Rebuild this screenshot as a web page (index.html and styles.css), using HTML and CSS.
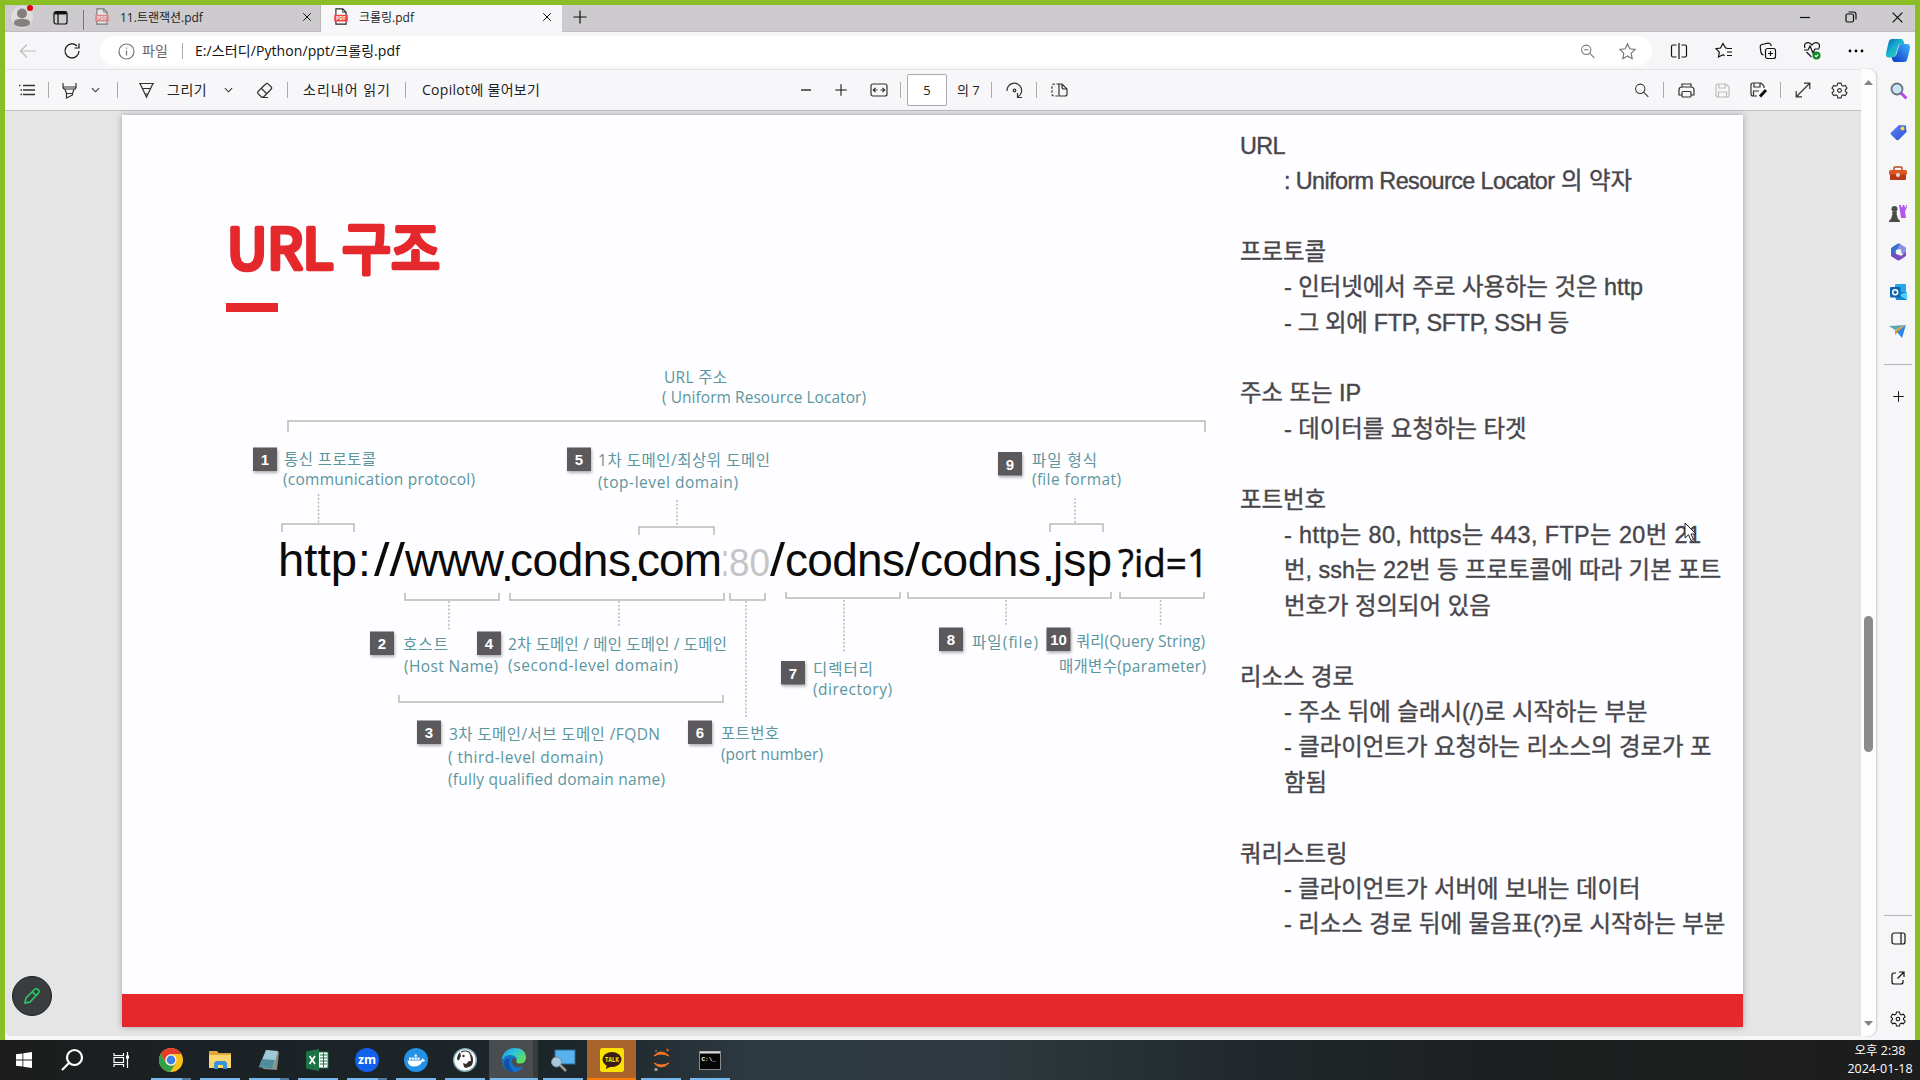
FILE: index.html
```html
<!DOCTYPE html>
<html lang="ko">
<head>
<meta charset="utf-8">
<title>크롤링.pdf</title>
<link rel="stylesheet" href="styles.css">
</head>
<body>
<svg class="defs" aria-hidden="true">
  <defs>
    <symbol id="gear" viewBox="0 0 20 20"><path d="M8.3 2.2h3.4l.6 2.4 1.4.8 2.4-.8 1.8 3-1.8 1.700v1.4l1.800 1.700-1.800 3-2.400-.8-1.400.8-.6 2.400H8.300l-.6-2.400-1.400-.8-2.400.8-1.800-3 1.800-1.700V9.300L2.100 7.600l1.800-3 2.400.8 1.400-.8z"/><circle cx="10" cy="10" r="2"/></symbol>
    <symbol id="pdf" viewBox="0 0 18 20"><path d="M3 1h8l4 4v14H3z" fill="#fff" stroke="#222" stroke-width="1.3"/><path d="M11 1v4h4" fill="none" stroke="#222"/><rect x="1" y="8" width="16" height="8" rx="1" fill="#ee4444"/><text x="9" y="14.200" text-anchor="middle" class="pdf-label">PDF</text></symbol>
    <symbol id="chev" viewBox="0 0 10 6"><path d="M1 1l4 4 4-4"/></symbol>
    <symbol id="plus" viewBox="0 0 16 16"><path d="M8 1.500v13M1.500 8h13"/></symbol>
    <symbol id="close" viewBox="0 0 12 12"><path d="M1.500 1.500l9 9M10.500 1.500l-9 9"/></symbol>
    <symbol id="lens" viewBox="0 0 20 20"><circle cx="8.500" cy="8" r="5.500"/><path d="M12.500 12l5.500 5.500"/></symbol>
    <symbol id="star" viewBox="0 0 20 20"><path d="M10 2l2.400 5.200 5.600.7-4.100 3.900 1 5.700L10 14.700l-4.900 2.800 1-5.700L2 7.900l5.600-.7z"/></symbol>
    <linearGradient id="gCop" x1="0" y1="0" x2="1" y2="1"><stop offset="0" stop-color="#0a63b8"/><stop offset=".45" stop-color="#16b3d0"/><stop offset="1" stop-color="#3be08c"/></linearGradient>
    <linearGradient id="gCop2" x1="0" y1="1" x2="1" y2="0"><stop offset="0" stop-color="#0b38c4"/><stop offset="1" stop-color="#3fb0ff"/></linearGradient>
    <linearGradient id="gEdge" x1="0" y1="0" x2="1" y2=".6"><stop offset="0" stop-color="#1d9ee8"/><stop offset=".5" stop-color="#2fc2d8"/><stop offset="1" stop-color="#5fe05a"/></linearGradient>
    <linearGradient id="gTag" x1="0" y1="0" x2="1" y2="1"><stop offset="0" stop-color="#5a86ff"/><stop offset="1" stop-color="#2e4ed0"/></linearGradient>
  </defs>
</svg>

<div class="browser">
  <header class="tabstrip">
    <span class="cell"><svg width="20" height="24" viewBox="0 0 20 24"><circle cx="10" cy="12" r="11" fill="#dedcdc"/><circle cx="10" cy="8.500" r="5" fill="#85807e"/><path d="M2 18c0-3 2-4 8-4s8 1 8 4c0 5-16 5-16 0z" fill="#85807e"/><circle cx="18" cy="3" r="3" fill="#e3000f"/></svg></span>
    <span class="cell"><svg class="ic dark" width="15" height="15" viewBox="0 0 15 15"><rect x="1" y="1.500" width="13" height="12.500" rx="2"/><path d="M1.500 3.200h12" stroke-width="2.500"/><path d="M5 3v11"/></svg></span>
    <span class="divider"></span>
    <div class="tab faded"><svg class="pdf" width="16" height="17"><use href="#pdf"/></svg><span class="t1">11.트랜잭션.pdf</span><svg class="ic dark x" width="10" height="10"><use href="#close"/></svg></div>
    <div class="tab active"><svg class="pdf" width="16" height="17"><use href="#pdf"/></svg><span class="t2">크롤링.pdf</span><svg class="ic dark x" width="10" height="10"><use href="#close"/></svg></div>
    <span class="cell"><svg class="ic dark" width="16" height="16"><use href="#plus"/></svg></span>
    <span></span>
    <span class="cell"><svg class="ic dark" width="12" height="12" viewBox="0 0 12 12"><path d="M1 6.500h10"/></svg></span>
    <span class="cell"><svg class="ic dark" width="12" height="12" viewBox="0 0 12 12"><rect x="1" y="3" width="7.500" height="8" rx="1.500"/><path d="M3.500 1h5q2.500 0 2.500 2.500v5"/></svg></span>
    <span class="cell"><svg class="ic dark" width="13" height="13"><use href="#close"/></svg></span>
  </header>

  <div class="address">
    <span class="cell"><svg class="ic pale" width="18" height="16" viewBox="0 0 18 16"><path d="M17 8H1.500M8 1.500L1.500 8 8 14.500"/></svg></span>
    <span class="cell"><svg class="ic dark" width="18" height="18" viewBox="0 0 18 18"><path d="M16 9a7 7 0 1 1-2-5M16 1.500V6h-4.500"/></svg></span>
    <div class="pill">
      <span class="cell"><svg class="ic mid" width="17" height="17" viewBox="0 0 17 17"><circle cx="8.500" cy="8.500" r="7.500"/><path d="M8.500 7.500v5M8.500 4.500v1.200"/></svg></span>
      <span class="kind">파일</span><span class="divider"></span><span class="url">E:/스터디/Python/ppt/크롤링.pdf</span>
      <span class="cell"><svg class="ic mid" width="17" height="17" viewBox="0 0 20 20"><use href="#lens"/><path d="M6 8h5"/></svg></span>
      <span class="cell"><svg class="ic mid" width="19" height="19"><use href="#star"/></svg></span>
    </div>
    <span class="cell"><svg class="ic dark" width="18" height="18" viewBox="0 0 18 18"><path d="M6.500 3H3Q1.500 3 1.500 4.500v9Q1.500 15 3 15h3.500M11.500 3H15q1.500 0 1.500 1.500v9Q16.500 15 15 15h-3.500M9 1v16"/></svg></span>
    <span class="cell"><svg class="ic dark" width="18" height="18" viewBox="0 0 18 18"><path d="M12 6.200L10.500 6 8 1.500 5.500 6l-4.500.7 3.300 3.500L3.500 15 8 12.700l1.500 1M12 6.500h5M12 10h5M12 13.500h5"/></svg></span>
    <span class="cell"><svg class="ic dark" width="18" height="18" viewBox="0 0 18 18"><rect x="6.500" y="6.500" width="10" height="10" rx="2"/><path d="M11.500 9v5M9 11.500h5M4.500 13Q2.500 12.500 2 10.500L1.200 5q-.2-2 1.600-2.500L9 1.200q2-.2 3 1.800l.3 1"/></svg></span>
    <span class="cell"><svg class="ic dark" width="18" height="19" viewBox="0 0 18 19"><path d="M2 7Q.5 3 3.500 1.800 7 .800 9 4q2-3.200 5.500-2.200Q17.500 3 16 7.500M3.500 11l5 5.200M1 9h4l2-4 3 7 2-4h4"/><circle cx="13.500" cy="14.500" r="4" fill="#138a25" stroke="none"/><path d="M12 14.500l1.200 1.200 2-2.200" stroke="#fff"/></svg></span>
    <span class="cell"><svg width="16" height="4" viewBox="0 0 16 4"><circle cx="2" cy="2" r="1.400"/><circle cx="8" cy="2" r="1.400"/><circle cx="14" cy="2" r="1.400"/></svg></span>
    <span class="cell"><svg width="24" height="23" viewBox="0 0 24 23"><path d="M6 0h9q2 0 2.600 2l.8 3h-3q-2.500 0-3.200 2.500L10 15q-1 3.500-4.500 3.500H3Q-1 18.500.3 13L2.500 3.500Q3.300 0 6 0z" fill="url(#gCop)"/><path d="M18 23H9q-2 0-2.600-2l-.8-2.700q3.500.4 4.400-3L12 8q.8-3 3.400-3H21q4 0 2.700 5.500l-2.200 9Q20.700 23 18 23z" fill="url(#gCop2)"/><path d="M12 8q.8-3 3.400-3h-1.900L10.500 15q-1 3.500-3.500 3.500 2.500 0 3-3.500z" fill="#fff"/></svg></span>
  </div>

  <main class="body">
    <section class="viewer">
      <div class="toolbar">
        <span class="cell"><svg class="ic" width="17" height="14" viewBox="0 0 17 14"><path d="M5 2.500h12M5 7h12M5 11.500h12M1 2.500h1.500M2.500 7H4M2.500 11.500H4" stroke-width="1.300"/></svg></span>
        <i class="divider"></i>
        <span class="cell"><svg class="ic" width="15" height="17" viewBox="0 0 15 17"><path d="M1 1v4q0 2 2 2h9q2 0 2-2V1M1 5h13M3 7.500l1.500 4h6l1.500-4M4.500 11.500V16l6-3v-1.500"/></svg></span>
        <span class="cell"><svg class="ic" width="9" height="6"><use href="#chev"/></svg></span>
        <i class="divider"></i>
        <span class="cell"><svg class="ic" width="17" height="16" viewBox="0 0 17 16"><path d="M1 1.500h15M2 1.500L8.500 15 15 1.500M4.500 6.500h8M7 12h3"/></svg></span>
        <span class="txt draw">그리기</span>
        <span class="cell"><svg class="ic" width="9" height="6"><use href="#chev"/></svg></span>
        <span class="cell"><svg class="ic" width="17" height="17" viewBox="0 0 17 17"><path d="M10 1.800q1-1 2 0L15.300 5q1 1 0 2L8 14.500q-1.500 1.500-3 0L2 11.500q-1-1 0-2zM5.500 6.500l5 5M5.500 15.500H12"/></svg></span>
        <i class="divider"></i>
        <span class="txt read">소리내어 읽기</span>
        <i class="divider"></i>
        <span class="txt ask">Copilot에 물어보기</span>
        <span></span>
        <span class="cell"><svg class="ic" width="12" height="12" viewBox="0 0 12 12"><path d="M1 6h10" stroke-width="1.500"/></svg></span>
        <span class="cell"><svg class="ic dark" width="14" height="14"><use href="#plus"/></svg></span>
        <span class="cell"><svg class="ic" width="18" height="14" viewBox="0 0 18 14"><rect x="1" y="1" width="16" height="12" rx="2"/><path d="M3 7h4.500M10.500 7H15M5.500 4.800L3.300 7l2.200 2.200M12.500 4.800L14.700 7l-2.200 2.200"/></svg></span>
        <i class="divider"></i>
        <span class="pageno">5</span>
        <span class="txt total">의 7</span>
        <i class="divider"></i>
        <span class="cell"><svg class="ic" width="17" height="17" viewBox="0 0 17 17"><path d="M1 9a7.300 7.300 0 1 1 11 5.800M11.500 11v4.500H16"/><circle cx="8.500" cy="8.500" r="1.300"/></svg></span>
        <i class="divider"></i>
        <span class="cell"><svg class="ic" width="17" height="14" viewBox="0 0 17 14"><path d="M8 1v12h6q2 0 2-2V6l-5-5zM11 1v3q0 2 2 2h3"/><path d="M8 1H3Q1 1 1 3v8q0 2 2 2h5" stroke-dasharray="2.500 1.500"/></svg></span>
        <span></span>
        <span class="cell"><svg class="ic" width="17" height="17"><use href="#lens"/></svg></span>
        <i class="divider"></i>
        <span class="cell"><svg class="ic" width="17" height="15" viewBox="0 0 17 15"><path d="M4 4V1h9v3M4 12H1V7q0-3 3-3h9q3 0 3 3v5h-3"/><rect x="4" y="8.500" width="9" height="5.500" rx="1"/></svg></span>
        <span class="cell"><svg class="ic pale" width="15" height="15" viewBox="0 0 15 15"><path d="M1 3q0-2 2-2h8l3 3v8q0 2-2 2H3q-2 0-2-2zM4 1v4h6V1M3.500 14V9h8v5"/></svg></span>
        <span class="cell"><svg class="ic" width="17" height="16" viewBox="0 0 17 16"><path d="M7 14H3q-2 0-2-2V3q0-2 2-2h8l3 3v2M4 1v4h6V1M3.500 14V9H9"/><path d="M16 8l-6 6.500" stroke-width="3" stroke="#111"/></svg></span>
        <i class="divider"></i>
        <span class="cell"><svg class="ic" width="16" height="16" viewBox="0 0 16 16"><path d="M1.500 14.500l13-13M9 1.200h5.800V7M1.200 9v5.800H7"/></svg></span>
        <span class="cell"><svg class="ic" width="19" height="19"><use href="#gear"/></svg></span>
      </div>

      <div class="canvas">
        <article class="slide">
          <div class="left">
            <svg class="title" width="240" height="66" viewBox="222 215 240 66"><text x="227" y="268.500" textLength="106" lengthAdjust="spacingAndGlyphs">URL</text><text x="342" y="268.500" textLength="98" lengthAdjust="spacingAndGlyphs">구조</text></svg>
            <div class="rule"></div>
            <svg class="diagram" width="980" height="460" viewBox="240 350 980 460">
              <g class="line">
                <path d="M288 432v-11h917v11M282 532v-8h72v8M639 535v-8h75v8M1050 532v-8h53v8M405 593v7h94v-7M510 593v7h214v-7M730 593v7h35v-7M786 592v6h114v-6M908 592v6h203v-6M1120 592v6h84v-6M399 695v7h324v-7"/>
                <path class="dots" d="M318.500 494v30M677 500v27M1075 498v26M449 601v30M619 601v26M746 601v117M844 600v53M1006 600v25M1160.500 600v25"/>
              </g>
              <g class="badge">
                <rect x="253" y="447.500" width="24" height="23.500"/><rect x="567" y="447.500" width="24" height="23.500"/><rect x="998" y="452" width="24" height="23.500"/><rect x="370" y="631.500" width="24" height="23.500"/><rect x="477" y="631.500" width="24" height="23.500"/><rect x="417" y="720.500" width="24" height="23.500"/><rect x="688" y="720.500" width="24" height="23.500"/><rect x="781" y="661" width="24" height="23.500"/><rect x="939" y="627.500" width="24" height="23.500"/><rect x="1046.500" y="627.500" width="24" height="23.500"/>
              </g>
              <g class="num">
                <text x="265" y="465">1</text><text x="579" y="465">5</text><text x="1010" y="469.500">9</text><text x="382" y="649">2</text><text x="489" y="649">4</text><text x="429" y="738">3</text><text x="700" y="738">6</text><text x="793" y="678.500">7</text><text x="951" y="645">8</text><text x="1058.500" y="645">10</text>
              </g>
              <g class="label">
                <text x="664" y="382.500" textLength="63">URL 주소</text><text x="662" y="402.500" textLength="204">( Uniform Resource Locator)</text>
                <text x="284" y="464.500" textLength="92">통신 프로토콜</text><text x="283" y="485" textLength="192">(communication protocol)</text>
                <text x="598" y="465.500" textLength="172">1차 도메인/최상위 도메인</text><text x="598" y="488" textLength="140">(top-level domain)</text>
                <text x="1032" y="465.500" textLength="65">파일 형식</text><text x="1032" y="485" textLength="89">(file format)</text>
                <text x="403" y="650" textLength="45">호스트</text><text x="404" y="671.500" textLength="94">(Host Name)</text>
                <text x="508" y="650" textLength="219">2차 도메인 / 메인 도메인 / 도메인</text><text x="508" y="670.500" textLength="170">(second-level domain)</text>
                <text x="449" y="740" textLength="211">3차 도메인/서브 도메인 /FQDN</text><text x="448" y="763" textLength="155">( third-level domain)</text><text x="448" y="785" textLength="217">(fully qualified domain name)</text>
                <text x="721" y="739" textLength="58">포트번호</text><text x="721" y="760" textLength="102">(port number)</text>
                <text x="813" y="675" textLength="60">디렉터리</text><text x="813" y="695" textLength="79">(directory)</text>
                <text x="972" y="648" textLength="66">파일(file)</text>
                <text x="1076" y="646.500" textLength="129">쿼리(Query String)</text><text x="1059" y="671.500" textLength="147">매개변수(parameter)</text>
              </g>
              <g class="big">
                <text x="278" y="575.500" textLength="79" lengthAdjust="spacingAndGlyphs">http</text><text x="358" y="575.500">:</text><text x="374" y="575.500" textLength="31" lengthAdjust="spacingAndGlyphs">//</text><text x="405" y="575.500" textLength="99">www</text><text x="501" y="581">.</text><text x="510" y="575.500" textLength="121">codns</text><text x="628" y="581">.</text><text x="637" y="575.500" textLength="85">com</text><text class="port" x="721" y="575.500" textLength="8" lengthAdjust="spacingAndGlyphs">:</text><text class="port digits" x="729" y="575.500" textLength="41" lengthAdjust="spacingAndGlyphs">80</text><text x="770" y="575.500" textLength="15" lengthAdjust="spacingAndGlyphs">/</text><text x="785" y="575.500" textLength="120">codns</text><text x="905" y="575.500" textLength="15" lengthAdjust="spacingAndGlyphs">/</text><text x="920" y="575.500" textLength="121">codns</text><text x="1042" y="581">.</text><text x="1053" y="575.500" textLength="59">jsp</text><text class="query" x="1118" y="577" textLength="90" lengthAdjust="spacingAndGlyphs">?id=1</text>
              </g>
            </svg>
          </div>
          <div class="notes">
            <h2 class="latin">URL</h2>
            <p><span class="latin">: Uniform Resource Locator</span> 의 약자</p>
            <h2>프로토콜</h2>
            <p>- 인터넷에서 주로 사용하는 것은 http</p>
            <p class="caps">- 그 외에 FTP, SFTP, SSH 등</p>
            <h2>주소 또는 IP</h2>
            <p>- 데이터를 요청하는 타겟</p>
            <h2>포트번호</h2>
            <p><span class="ports">- http는 80, https는 443, FTP는 20번 21</span><br>번, ssh는 22번 등 프로토콜에 따라 기본 포트<br>번호가 정의되어 있음</p>
            <h2>리소스 경로</h2>
            <p>- 주소 뒤에 슬래시(/)로 시작하는 부분</p>
            <p>- 클라이언트가 요청하는 리소스의 경로가 포<br>함됨</p>
            <h2>쿼리스트링</h2>
            <p>- 클라이언트가 서버에 보내는 데이터</p>
            <p>- 리소스 경로 뒤에 물음표(?)로 시작하는 부분</p>
          </div>
        </article>
        <span class="pen"><svg width="18" height="18" viewBox="0 0 18 18" fill="none" stroke="#25d366" stroke-width="1.500"><path d="M2 16l1-5 8.500-8.500q2-1.500 3.600 0 1.700 1.600.4 3.500L7 15zM9.500 5l3.500 3.500"/></svg></span>
        <svg class="cursor" width="14" height="21" viewBox="0 0 14 21"><path d="M1 1v15l3.500-3.300L7 18.500l2.500-1L7 12h5z" fill="#fff" stroke="#222"/></svg>
      </div>
    </section>
    <div class="scroll"><svg width="9" height="5" viewBox="0 0 9 5"><path d="M0 5l4.500-5L9 5z" fill="#838383"/></svg><span class="thumb"></span><svg width="9" height="5" viewBox="0 0 9 5"><path d="M0 0l4.500 5L9 0z" fill="#838383"/></svg></div>
    <aside class="side">
      <span class="cell"><svg width="17" height="17" viewBox="0 0 17 17"><path d="M11 11l4.500 4.500" stroke="#b548ee" stroke-width="3" stroke-linecap="round"/><circle cx="7" cy="7" r="5.500" fill="#cbe4f5" stroke="#68727c" stroke-width="1.800"/></svg></span>
      <span class="cell"><svg width="17" height="17" viewBox="0 0 17 17"><path d="M1 8.500L9 1l7 .5L16.500 8 8.500 16q-1 .7-2 0L1 10.500q-.7-1 0-2z" fill="url(#gTag)"/><circle cx="12.500" cy="4.500" r="2" fill="#ffd83d"/></svg></span>
      <span class="cell"><svg width="18" height="15" viewBox="0 0 18 15"><path d="M5 5V2q0-1 1-1h6q1 0 1 1v3" fill="none" stroke="#b04a22" stroke-width="1.500"/><rect y="4" width="18" height="5" rx="1.500" fill="#dd5624"/><path d="M1 8.500h16V13q0 1-1 1H2q-1 0-1-1z" fill="#b83815"/><circle cx="9" cy="9" r="2" fill="#ddd"/></svg></span>
      <span class="cell"><svg width="18" height="18" viewBox="0 0 18 18"><path d="M10 1h2v2h1.500V1h2v2H17V1h1l-1 5-1 1 1 7h-5z" fill="#b159ec"/><circle cx="5.500" cy="5" r="3" fill="#4b4b4b"/><path d="M3 8h5l-.5 2 1.500 5q2 .5 2 3H0q0-2.500 2-3l1.500-5z" fill="#4b4b4b"/></svg></span>
      <span class="cell"><svg width="17" height="18" viewBox="0 0 17 18"><path d="M1 5l6-4q2-.800 3.500 0v5L6 8v7L1 13z" fill="#3972ce"/><path d="M10 1l6 3.500V13l-5-3V6L6 8z" fill="#8e8ee0"/><path d="M1 13l5-4v1l5 3 5-4v4l-6 4q-1.500.8-3 0z" fill="#7c4bbd"/><circle cx="8.500" cy="9" r="2.800" fill="#f6f5f8"/></svg></span>
      <span class="cell"><svg width="17" height="16" viewBox="0 0 17 16"><rect x="5" width="11" height="14" rx="1" fill="#28a8ea"/><path d="M5 8h12v7q0 1-1 1H6z" fill="#1485d1"/><path d="M17 8v8L9 11z" fill="#50d0ff"/><rect y="3" width="10.500" height="10.500" rx="1" fill="#0f64b0"/><circle cx="5.200" cy="8.200" r="2.500" fill="none" stroke="#fff" stroke-width="1.500"/></svg></span>
      <span class="cell"><svg width="18" height="14" viewBox="0 0 18 14"><path d="M0 2L17 1 6 6z" fill="#5aa7b0"/><path d="M6 6L17 1 6 11z" fill="#d8a13e"/><path d="M17 1l-4 13-5-6z" fill="#2c87e8"/></svg></span>
      <hr>
      <span class="cell"><svg class="ic dark" width="13" height="13"><use href="#plus"/></svg></span>
      <span></span>
      <hr>
      <span class="cell"><svg class="ic dark" width="15" height="13" viewBox="0 0 15 13"><rect x="1" y="1" width="13" height="11" rx="2"/><path d="M10 1v11"/></svg></span>
      <span class="cell"><svg class="ic dark" width="14" height="14" viewBox="0 0 14 14"><path d="M5 2H3Q1 2 1 4v7q0 2 2 2h7q2 0 2-2V9M8 1h5v5M13 1L6.500 7.500"/></svg></span>
      <span class="cell"><svg class="ic dark" width="18" height="18"><use href="#gear"/></svg></span>
    </aside>
  </main>
</div>

<footer class="taskbar">
  <span class="cell"><svg width="16" height="16" viewBox="0 0 16 16" fill="#fff"><path d="M0 2.300l6.500-.9v6.200H0zM7.300 1.300L16 0v7.600H7.300zM0 8.400h6.500v6.200L0 13.700zM7.300 8.400H16V16l-8.700-1.300z"/></svg></span>
  <span class="cell"><svg width="22" height="22" viewBox="0 0 22 22" fill="none" stroke="#fff" stroke-width="2.200"><circle cx="13.500" cy="8.500" r="7.500"/><path d="M8 14l-7 7"/></svg></span>
  <span class="cell"><svg width="16" height="16" viewBox="0 0 16 16" fill="none" stroke="#fff" stroke-width="1.200"><path d="M1 1v2.500h9.500V1M1 15v-2.500h9.500V15M14.500 0v16"/><rect x="1" y="5.500" width="9.500" height="5"/><path d="M13 5h3" stroke-width="3"/></svg></span>
  <span class="cell app split"><svg width="24" height="24" viewBox="0 0 24 24"><circle cx="12" cy="12" r="12" fill="#fbc116"/><path d="M1.600 6A12 12 0 0 1 22.400 6H12a6 6 0 0 0-5 9z" fill="#e33b2e"/><path d="M1.600 6A12 12 0 0 0 11 24l6-9a6 6 0 0 1-10.200 0z" fill="#2da24c"/><circle cx="12" cy="12" r="5.500" fill="#fff"/><circle cx="12" cy="12" r="4.400" fill="#3f7ee8"/></svg></span>
  <span class="cell app"><svg width="22" height="18" viewBox="0 0 22 18"><path d="M0 0h8l1.500 2H22v15H0z" fill="#e0a83a"/><path d="M0 4h22v13H0z" fill="#fad670"/><path d="M5 18v-6l2-2h9l2 2v6h-4v-4H9v4z" fill="#3a93d8"/></svg></span>
  <span class="cell app split"><svg width="22" height="22" viewBox="0 0 22 22"><path d="M8 1l13 2-2 18-14-1z" fill="#8d8c80"/><path d="M8 1l12 1-5 18-14-2z" fill="#9fcad5"/><path d="M4 10l13 1-2.500 9L1 18z" fill="#528d9d"/></svg></span>
  <span class="cell app"><svg width="23" height="22" viewBox="0 0 23 22"><rect x="11" y="3" width="11" height="16" fill="#fff" stroke="#1d7345"/><path d="M14 6h7M14 9h7M14 12h7M14 15h7M17.500 4v14" stroke="#1d7345"/><path d="M0 2.500L13 0v22L0 19.500z" fill="#1d7345"/><path d="M3.500 7l5.500 8M9 7l-5.500 8" stroke="#fff" stroke-width="1.800"/></svg></span>
  <span class="cell app split"><svg width="24" height="24" viewBox="0 0 24 24"><circle cx="12" cy="12" r="12" fill="#1260ee"/><text x="12" y="15.500" text-anchor="middle" textLength="18" lengthAdjust="spacingAndGlyphs" class="zm">zm</text></svg></span>
  <span class="cell app"><svg width="24" height="24" viewBox="0 0 24 24"><circle cx="12" cy="12" r="12" fill="#2391e6"/><path d="M3.500 12.500h13q2-.2 1.800-2.500 1.300.5 1.200 1.800 1 0 1.700.4-1 1.500-3 1.500Q16 18.500 10 18.500q-6 0-6.500-6z" fill="#fff"/><path d="M5 9.500h2.200v2.200H5zM7.800 9.500H10v2.200H7.800zM10.600 9.500h2.200v2.200h-2.200zM13.400 9.500h2.200v2.200h-2.200zM10.600 6.500h2.200v2.200h-2.200z" fill="#fff"/></svg></span>
  <span class="cell app"><svg width="24" height="24" viewBox="0 0 24 24"><circle cx="12" cy="12" r="11.300" fill="#fff" stroke="#83aeb5" stroke-width="1.400"/><path d="M7 4Q5 6 4 10q0 3 2 2l2-4z" fill="#35302d"/><path d="M17 6q3 1 3 6 0 6-4 7l-3 1-2-1-1-4 3 1 3-3 2 0z" fill="#35302d"/><circle cx="10.500" cy="8" r="1.200" fill="#35302d"/><path d="M8 4q4-2 8 0l2 3" fill="none" stroke="#35302d" stroke-width="1.200"/></svg></span>
  <span class="cell app current"><svg width="24" height="24" viewBox="0 0 24 24"><path d="M0 12A12 12 0 0 1 12 0q11.500 0 12 9.500-.2 6-6 6-4.500 0-3.500-3 .5-4-4-4.500Q4 8 0 12z" fill="url(#gEdge)"/><path d="M0 13Q2 7 8 7q5 0 6.500 4-3-2-4.500 1-1 4 3 7 4 2 9-1-4 6-10 6Q1 23.500 0 13z" fill="#1671c8"/><path d="M8 11q-3 7 4 12.800Q3 24 2 15q1-5 6-4z" fill="#0f519f"/></svg></span>
  <span class="cell app"><svg width="24" height="24" viewBox="0 0 24 24"><rect x="4" y="2" width="20" height="14" fill="#58b2ee" stroke="#2e6890"/><circle cx="5.500" cy="14" r="5" fill="#a9cadd" stroke="#768b98"/><path d="M9 17l6 6" stroke="#9c9c9c" stroke-width="2.500"/></svg></span>
  <span class="cell app talk"><svg width="24" height="24" viewBox="0 0 24 24"><rect width="24" height="24" rx="2.500" fill="#fae100"/><ellipse cx="12" cy="11.500" rx="9.500" ry="7.500" fill="#3a1c1c"/><path d="M7 16l-1 5 6-3z" fill="#3a1c1c"/><text x="12" y="14" text-anchor="middle" textLength="14" lengthAdjust="spacingAndGlyphs" class="talk-label">TALK</text></svg></span>
  <span class="cell app"><svg width="18" height="24" viewBox="0 0 18 24"><path d="M2 8q7-8 15 0Q9 4 2 8zM2 15q7 8 15 0-8 4-15 0z" fill="#f37726" stroke="#f37726"/><circle cx="4" cy="3" r="1" fill="#777"/><circle cx="15.500" cy="2" r="1.500" fill="#a05a35"/><circle cx="4" cy="21.500" r="1.700" fill="#989898"/></svg></span>
  <span class="cell app"><svg width="22" height="19" viewBox="0 0 22 19"><rect x=".5" y=".5" width="21" height="18" fill="#050505" stroke="#8b8b8b"/><path d="M1 1.500h20" stroke="#ddd" stroke-width="2"/><text x="2.500" y="9.500" class="cmd">C:\_</text></svg></span>
  <span></span>
  <div class="clock"><span>오후 2:38</span><span>2024-01-18</span></div>
</footer>
</body>
</html>
```
FILE: styles.css
```css
* { box-sizing: border-box; }
body {
  margin: 0;
  width: 1920px;
  height: 1080px;
  overflow: hidden;
  background: #8bbd24;
  font: 13px "Open Sans", "Noto Sans CJK KR", sans-serif;
  color: #222;
}
svg { display: block; flex: none; overflow: visible; }
.defs { position: absolute; width: 0; height: 0; }
.cell { display: flex; align-items: center; justify-content: center; }
.ic { fill: none; stroke: #333; stroke-width: 1.2; }
.dark { stroke: #111; }
.mid { stroke: #767676; }
.pale { stroke: #bcbcbc; }
.divider { width: 1px; height: 16px; background: #aaa; justify-self: center; align-self: center; }

.browser { height: 1040px; padding: 5px 5px 0; display: flex; flex-direction: column; }

.tabstrip {
  height: 27px;
  flex: none;
  display: grid;
  grid-template-columns: 34px 42px 4px 236px 241px 36px 1fr 36px 56px 36px;
  background: #cdcbce;
  box-shadow: inset 0 -1px #bfbdc0;
}
.tabstrip .divider { height: 20px; background: #777; }
.tabstrip .cell { padding-bottom: 6px; }
.tab { display: flex; align-items: center; padding: 0 8px 7px 9px; border-right: 1px solid #b9b8bb; font-size: 12px; }
.tab span { margin-left: 10px; white-space: nowrap; }
.tab .x { margin-left: auto; }
.tab.active { background: #f7f7f9; border: 0; padding: 0 10px 7px 12px; }
.faded .pdf { opacity: .5; }
.pdf-label { font: bold 6px "Open Sans", sans-serif; fill: #fff; }

.address {
  height: 37px;
  flex: none;
  display: grid;
  grid-template-columns: 46px 42px 7px 1552px 53px 37px 51px 37px 51px 34px;
  background: #f6f6f8;
}
.pill {
  grid-column: 4;
  height: 30px;
  margin-top: 4px;
  border-radius: 15px;
  background: #fff;
  display: grid;
  grid-template-columns: 42px 26px 18px 1fr 30px 50px;
  align-items: center;
  padding-left: 5px;
}
.pill .cell:first-child { justify-content: flex-start; padding-left: 13px; }
.kind { color: #666; font-size: 14px; margin: -2px 0 0 -5px; white-space: nowrap; }
.url { font-size: 14px; letter-spacing: .08px; color: #111; padding-left: 4px; margin-top: -2px; white-space: nowrap; }

.body { flex: 1; min-height: 0; display: grid; grid-template-columns: 1856px 15px 39px; background: #f6f6f8; padding-bottom: 4px; }
.viewer { display: flex; flex-direction: column; border-top: 1px solid #e2e2e5; border-radius: 6px 0 0 6px; overflow: hidden; background: #e5e5e5; }
.toolbar {
  height: 41px;
  flex: none;
  display: grid;
  grid-template-columns: 42px 3px 38px 14px 31px 26px 56px 27px 44px 2px 116px 3px 150px 237px 24px 46px 29px 14px 40px 42px 5px 40px 5px 40px 543px 38px 7px 38px 34px 38px 7px 38px 34px;
  align-items: center;
  background: #f7f7f9;
  border-bottom: 1px solid #bfbfc2;
}
.txt { white-space: nowrap; font-size: 14px; margin-top: -2px; }
.draw { padding-left: 8px; letter-spacing: .5px; }
.read { padding-left: 15px; letter-spacing: 1px; }
.ask { padding-left: 15px; letter-spacing: .3px; }
.total { padding-left: 10px; font-size: 13px; }
.pageno { height: 32px; border: 1px solid #a9a9ad; border-radius: 2px; background: #fff; display: flex; align-items: center; justify-content: center; }
.canvas { position: relative; flex: 1; padding: 4px 0 0 117px; }
.slide {
  width: 1621px;
  height: 912px;
  background: #fefdff;
  border-bottom: 33px solid #e5282b;
  box-shadow: 0 0 6px rgba(60, 50, 70, .4);
  display: grid;
  grid-template-columns: 1118px 1fr;
}
.title { margin: 100px 0 0 100px; fill: #e5282b; stroke: #e5282b; stroke-width: 4.5; stroke-linejoin: round; font: 400 56px "Noto Sans CJK KR", sans-serif; }
.rule { width: 52px; height: 9px; background: #e5282b; margin: 22px 0 38px 104px; }
.diagram { margin-left: 118px; }
.line { fill: none; stroke: #bbb8b8; stroke-width: 1.5; }
.dots { stroke-width: 1.5; stroke-dasharray: 2 1.8; }
.badge { fill: #5b595c; filter: drop-shadow(1px 2px 1.5px rgba(0, 0, 0, .3)); }
.num { fill: #fff; font: bold 15px "Liberation Sans", sans-serif; text-anchor: middle; }
.label { fill: #5b969e; font: 15.5px "Open Sans", "Noto Sans CJK KR", sans-serif; }
.big { fill: #0b0b0b; font: 46px "Liberation Sans", sans-serif; }
.big .port { fill: #c6c4c6; }
.big .digits { font-size: 39px; }
.big .query { font: 38px "Open Sans", sans-serif; stroke: #0b0b0b; stroke-width: .5; }
.notes { padding-top: 13.5px; font: 400 23.400px/35.400px "Liberation Sans", "Noto Sans CJK KR", sans-serif; -webkit-text-stroke: .4px #48464a; color: #48464a; white-space: nowrap; }
.notes h2 { margin: 35.400px 0 0; font: inherit; }
.notes h2:first-child { margin-top: 0; }
.notes p { margin: 0 0 0 44px; }
.notes .latin { letter-spacing: -.6px; }
.notes .caps { letter-spacing: -.3px; }
.notes .ports { letter-spacing: .4px; }
.pen { position: absolute; left: 7px; top: 865px; width: 40px; height: 40px; border-radius: 50%; background: #3a3d40; border: 1px solid #202326; display: flex; align-items: center; justify-content: center; }
.cursor { position: absolute; left: 1679px; top: 411px; }

.scroll { background: #fdfdfe; border-radius: 0 8px 8px 0; box-shadow: 1px 0 2px rgba(0, 0, 0, .18); display: flex; flex-direction: column; align-items: center; padding: 11px 0 10px; }
.thumb { width: 9px; height: 136px; border-radius: 5px; background: #8b8b8d; margin: 531px 0 auto; }
.side { display: grid; grid-template-rows: 43px 40px 42px 37px 42px 38px 40px 26px 38px 1fr 3px 42px 38px 43px; justify-items: center; padding-left: 5px; margin-bottom: -4px; }
.side hr { width: 28px; height: 1px; margin: 0; border: 0; background: #b5b5b8; align-self: center; }

.taskbar {
  height: 40px;
  display: grid;
  grid-template-columns: 48px 48px 50px repeat(12, 49px) 1fr 80px;
  background: linear-gradient(90deg, #1c1c1c, #1b2226 12%, #1d262a 30%, #2c3940 39%, #2d393e 52%, #20272a 66%, #1c1e1f 80%, #1d1d1d);
}
.app { background: linear-gradient(#77b8ee, #77b8ee) 50% 100% / 40px 2px no-repeat; }
.split { background: linear-gradient(90deg, #77b8ee 31px, #4f7ca0 31px) 50% 100% / 40px 2px no-repeat; }
.current { background: linear-gradient(#77b8ee, #77b8ee) 50% 100% / 48px 2px no-repeat, linear-gradient(90deg, #4a4d50 44px, #383c3f 44px); }
.talk { background: linear-gradient(#ff7b00, #ff7b00) 50% 100% / 49px 2px no-repeat, #a9642e; }
.zm { font: bold 12px "Open Sans", sans-serif; fill: #fff; }
.talk-label { font: bold 7px "Open Sans", sans-serif; fill: #fae100; }
.cmd { font: bold 6px "Liberation Mono", monospace; fill: #fff; }
.clock { display: flex; flex-direction: column; align-items: center; justify-content: center; line-height: 18px; font-size: 12.500px; color: #fff; }
```
